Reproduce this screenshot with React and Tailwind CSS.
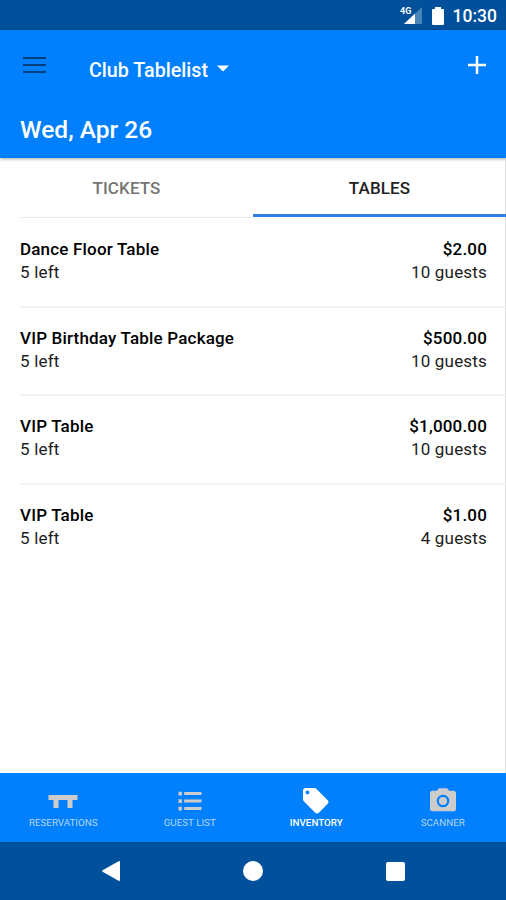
const tables = [
  { name: "Dance Floor Table", left: "5 left", price: "$2.00", guests: "10 guests" },
  { name: "VIP Birthday Table Package", left: "5 left", price: "$500.00", guests: "10 guests" },
  { name: "VIP Table", left: "5 left", price: "$1,000.00", guests: "10 guests" },
  { name: "VIP Table", left: "5 left", price: "$1.00", guests: "4 guests" },
];

function TableIcon() {
  return (
    <svg width="30" height="28" viewBox="0 0 30 28" fill="currentColor">
      <path d="M.5 8h29v5h-5v8h-5v-8h-9v8h-5v-8h-5z" />
    </svg>
  );
}

function ListIcon() {
  return (
    <svg width="24" height="28" viewBox="0 0 24 28" fill="currentColor">
      <path d="M.5 4.800h3.400v3.600H.5zM6.200 5h17.300v3H6.200zM.5 12.300h3.400v3.600H.5zM6.200 12.500h17.300v3H6.200zM.5 19.800h3.400v3.600H.5zM6.200 20h17.300v3H6.200z" />
    </svg>
  );
}

function TagIcon() {
  return (
    <svg width="30" height="28" viewBox="0.4 1.2 23.6 22" fill="currentColor">
      <path d="M21.41 11.58l-9-9C12.05 2.22 11.55 2 11 2H4c-1.1 0-2 .9-2 2v7c0 .55.22 1.05.59 1.42l9 9c.36.36.86.58 1.41.58.55 0 1.05-.22 1.41-.59l7-7c.37-.36.59-.86.59-1.41 0-.55-.23-1.06-.59-1.42zM5.5 7C4.67 7 4 6.33 4 5.5S4.67 4 5.5 4 7 4.67 7 5.5 6.33 7 5.5 7z" />
    </svg>
  );
}

function CameraIcon() {
  return (
    <svg width="30" height="28" viewBox="0 0 30 28" fill="currentColor" fillRule="evenodd">
      <path d="M11 1.200h8l2.300 2.600h4.200A2.500 2.500 0 0 1 28 6.300v15.400a2.500 2.500 0 0 1-2.500 2.500h-21A2.500 2.500 0 0 1 2 21.700V6.300a2.500 2.500 0 0 1 2.500-2.500h4.200zM15 7.700a6.300 6.300 0 1 0 0 12.600 6.300 6.300 0 0 0 0-12.600z" />
      <circle cx="15" cy="14" r="4.100" />
    </svg>
  );
}

const navItems = [
  { label: "RESERVATIONS", icon: TableIcon },
  { label: "GUEST LIST", icon: ListIcon },
  { label: "INVENTORY", icon: TagIcon, active: true },
  { label: "SCANNER", icon: CameraIcon },
];

function StatusBar() {
  return (
    <div className="flex h-[30px] shrink-0 items-center justify-end bg-[#00509c] pt-[2px] pr-[9px] text-white">
      <svg width="24" height="20" viewBox="0 0 24 20" className="mr-[8px]">
        <path d="M22 1v17H4z" fill="#4a85b9" />
        <path d="M15 7.500V18H4z" fill="white" />
        <rect width="12" height="9" fill="#00509c" />
        <text x="0" y="8" fontSize="9" fontWeight="700" fontFamily="Roboto, sans-serif" fill="white">
          4G
        </text>
      </svg>
      <svg width="12" height="18" viewBox="0 0 12 18" className="mr-[9px]" fill="white">
        <path d="M3 0h6v2h2a1 1 0 0 1 1 1v14a1 1 0 0 1-1 1H1a1 1 0 0 1-1-1V3a1 1 0 0 1 1-1h2z" />
      </svg>
      <span className="text-[17.5px] leading-5 font-medium">10:30</span>
    </div>
  );
}

function Header() {
  return (
    <header className="z-10 h-32 shrink-0 bg-[#0080fc] text-white shadow-[0_1px_3px_rgba(0,0,0,0.35)]">
      <div className="flex h-[70px] items-center">
        <button type="button" aria-label="Menu" className="ml-[23px] flex flex-col gap-[5px]">
          <span className="h-[2px] w-[23px] bg-[#003e80]" />
          <span className="h-[2px] w-[23px] bg-[#003e80]" />
          <span className="h-[2px] w-[23px] bg-[#003e80]" />
        </button>
        <button type="button" className="mt-[11px] ml-[43px] flex items-center">
          <span className="text-[19.7px] leading-6 font-medium">Club Tablelist</span>
          <svg width="12" height="7" viewBox="0 0 12 7" className="mb-[5px] ml-[9px]" fill="white">
            <path d="M0 .5h12l-6 6z" />
          </svg>
        </button>
        <button type="button" aria-label="Add" className="mr-[20px] ml-auto">
          <svg width="18" height="18" viewBox="0 0 18 18" stroke="white" strokeWidth="2.500">
            <path d="M9 0v18M0 9h18" />
          </svg>
        </button>
      </div>
      <h1 className="pl-5 text-[24.5px] leading-[60px] font-medium">Wed, Apr 26</h1>
    </header>
  );
}

function Tabs() {
  return (
    <div className="flex h-[60px] shrink-0 text-[17px] font-medium">
      <div className="ml-5 flex w-[233px] items-center justify-center border-b border-[#e8ecef] pt-[2px] pr-5 tracking-[0.1px] text-[#757575]">
        TICKETS
      </div>
      <div className="-mr-px mb-px flex flex-1 items-center justify-center border-b-[3px] border-[#2f80e0] pt-[5px] tracking-[0.1px] text-[#212121]">
        TABLES
      </div>
    </div>
  );
}

function TableRow({ table }) {
  return (
    <li className="-mr-px ml-5 flex h-[88.6px] justify-between border-b-2 border-[#f3f3f3] pt-[19px] pr-[19px] text-[17px] leading-[23.3px] tracking-[0.18px] text-[#1c1c1c] last:border-0">
      <div>
        <p className="font-medium text-black">{table.name}</p>
        <p>{table.left}</p>
      </div>
      <div className="text-right">
        <p className="font-medium text-black">{table.price}</p>
        <p>{table.guests}</p>
      </div>
    </li>
  );
}

function BottomNav() {
  return (
    <nav className="grid h-[69px] shrink-0 grid-cols-4 bg-[#0080fc]">
      {navItems.map(({ label, icon: Icon, active }) => (
        <div
          key={label}
          className={active ? "flex flex-col items-center pt-[14px] text-white" : "flex flex-col items-center pt-[14px] text-[#cccccc]"}
        >
          <Icon />
          <span
            className={
              active
                ? "mt-[2px] text-[9.8px] leading-3 font-medium"
                : "mt-[2px] text-[9.8px] leading-3 text-[#b5d5f5]"
            }
          >
            {label}
          </span>
        </div>
      ))}
    </nav>
  );
}

function SystemBar() {
  return (
    <div className="flex h-[58px] shrink-0 items-center justify-between bg-[#00509c] pr-[101px] pl-[102px]">
      <svg width="18" height="20" viewBox="0 0 18 20" fill="white">
        <path d="M17 0q1 0 1 1v18q0 1-1 1L.6 10.800q-1-.8 0-1.600z" />
      </svg>
      <div className="h-5 w-5 rounded-full bg-white" />
      <div className="size-[19px] rounded-[2px] bg-white" />
    </div>
  );
}

export default function App() {
  return (
    <div className="flex h-screen w-full flex-col overflow-hidden bg-white font-['Roboto',sans-serif]">
      <StatusBar />
      <Header />
      <main className="flex min-h-0 flex-1 flex-col border-r border-[#dedede]">
        <Tabs />
        <ul className="pt-px">
          {tables.map((table, i) => (
            <TableRow key={i} table={table} />
          ))}
        </ul>
      </main>
      <BottomNav />
      <SystemBar />
    </div>
  );
}
